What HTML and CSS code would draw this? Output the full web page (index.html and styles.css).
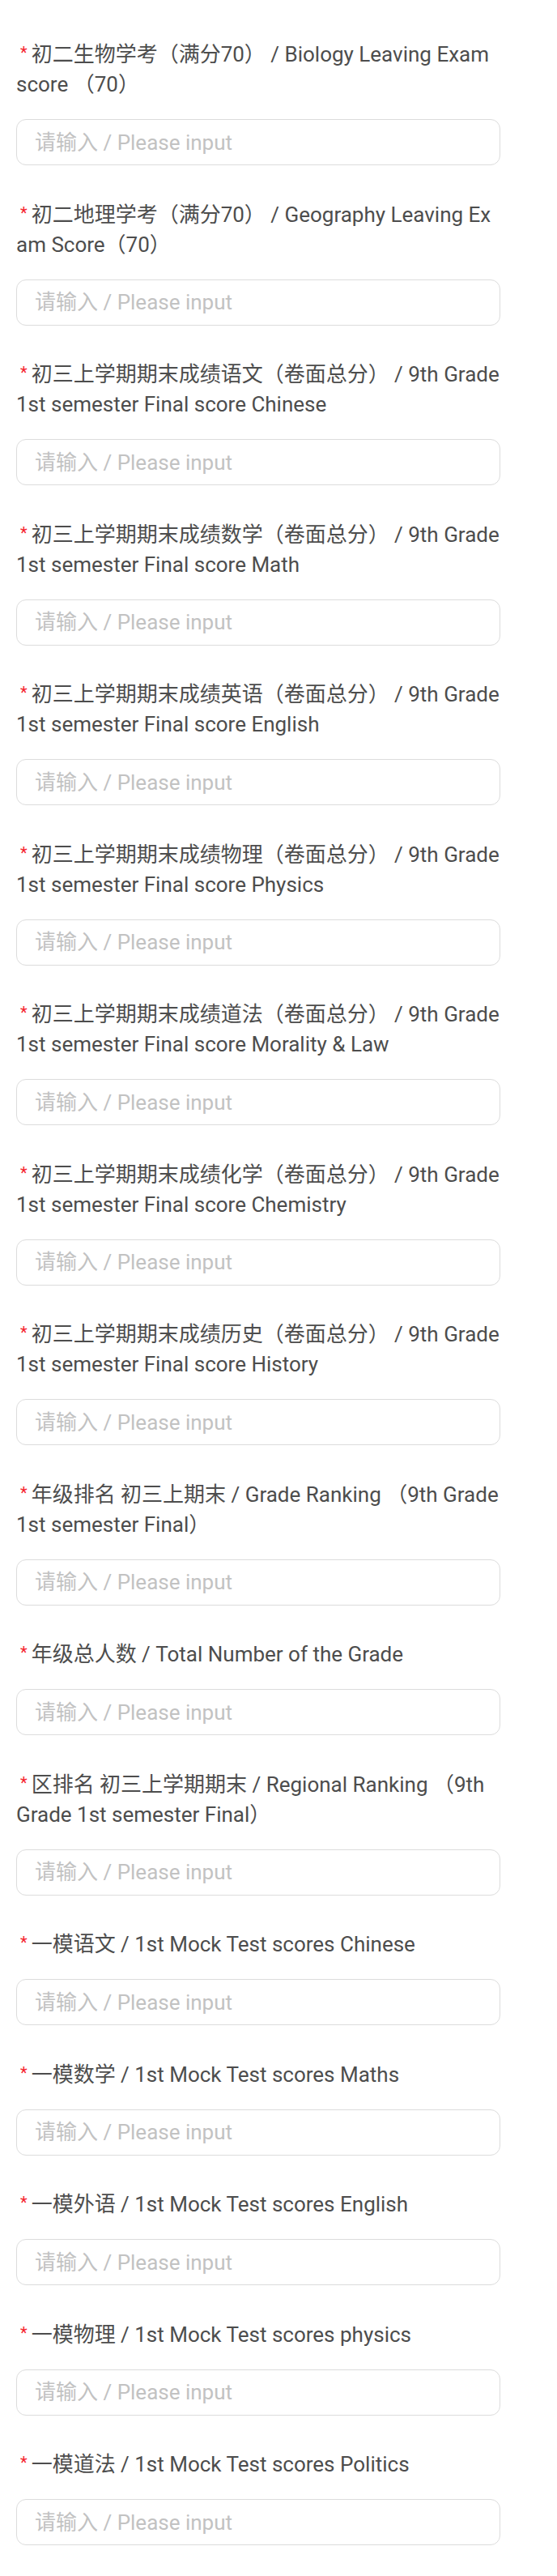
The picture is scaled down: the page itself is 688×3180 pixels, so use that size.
FILE: index.html
```html
<!DOCTYPE html>
<html lang="zh-CN">
<head>
  <meta charset="UTF-8">
  <title>成绩信息 / Scores</title>
  <link rel="stylesheet" href="styles.css">
</head>
<body>

<form class="formulario">
  <div class="campo">
    <label><span class="req">*</span>初二生物学考（满分70） / Biology Leaving Exam score （70）</label>
    <input type="text" placeholder="请输入 / Please input">
  </div>
  <div class="campo">
    <label><span class="req">*</span>初二地理学考（满分70） / Geography Leaving Exam Score（70）</label>
    <input type="text" placeholder="请输入 / Please input">
  </div>
  <div class="campo">
    <label><span class="req">*</span>初三上学期期末成绩语文（卷面总分） / 9th Grade 1st semester Final score Chinese</label>
    <input type="text" placeholder="请输入 / Please input">
  </div>
  <div class="campo">
    <label><span class="req">*</span>初三上学期期末成绩数学（卷面总分） / 9th Grade 1st semester Final score Math</label>
    <input type="text" placeholder="请输入 / Please input">
  </div>
  <div class="campo">
    <label><span class="req">*</span>初三上学期期末成绩英语（卷面总分） / 9th Grade 1st semester Final score English</label>
    <input type="text" placeholder="请输入 / Please input">
  </div>
  <div class="campo">
    <label><span class="req">*</span>初三上学期期末成绩物理（卷面总分） / 9th Grade 1st semester Final score Physics</label>
    <input type="text" placeholder="请输入 / Please input">
  </div>
  <div class="campo">
    <label><span class="req">*</span>初三上学期期末成绩道法（卷面总分） / 9th Grade 1st semester Final score Morality &amp; Law</label>
    <input type="text" placeholder="请输入 / Please input">
  </div>
  <div class="campo">
    <label><span class="req">*</span>初三上学期期末成绩化学（卷面总分） / 9th Grade 1st semester Final score Chemistry</label>
    <input type="text" placeholder="请输入 / Please input">
  </div>
  <div class="campo">
    <label><span class="req">*</span>初三上学期期末成绩历史（卷面总分） / 9th Grade 1st semester Final score History</label>
    <input type="text" placeholder="请输入 / Please input">
  </div>
  <div class="campo">
    <label><span class="req">*</span>年级排名 初三上期末 / Grade Ranking （9th Grade 1st semester Final）</label>
    <input type="text" placeholder="请输入 / Please input">
  </div>
  <div class="campo">
    <label><span class="req">*</span>年级总人数 / Total Number of the Grade</label>
    <input type="text" placeholder="请输入 / Please input">
  </div>
  <div class="campo">
    <label><span class="req">*</span>区排名 初三上学期期末 / Regional Ranking （9th Grade 1st semester Final）</label>
    <input type="text" placeholder="请输入 / Please input">
  </div>
  <div class="campo">
    <label><span class="req">*</span>一模语文 / 1st Mock Test scores Chinese</label>
    <input type="text" placeholder="请输入 / Please input">
  </div>
  <div class="campo">
    <label><span class="req">*</span>一模数学 / 1st Mock Test scores Maths</label>
    <input type="text" placeholder="请输入 / Please input">
  </div>
  <div class="campo">
    <label><span class="req">*</span>一模外语 / 1st Mock Test scores English</label>
    <input type="text" placeholder="请输入 / Please input">
  </div>
  <div class="campo">
    <label><span class="req">*</span>一模物理 / 1st Mock Test scores physics</label>
    <input type="text" placeholder="请输入 / Please input">
  </div>
  <div class="campo">
    <label><span class="req">*</span>一模道法 / 1st Mock Test scores Politics</label>
    <input type="text" placeholder="请输入 / Please input">
  </div>
</form>

</body>
</html>
```

FILE: styles.css
```css
body {
  font-family: Roboto, "Noto Sans CJK SC", sans-serif;
  background-color: #fff;
  color: #4d4d4d;
  margin: 0;
  padding: 49px 0 0 20px;
}
.formulario {
  width: 598px;
  display: flex;
  flex-direction: column;
  gap: 42.5px;
}
.campo {
  display: flex;
  flex-direction: column;
  gap: 24px;
}
.campo label {
  font-size: 26px;
  line-height: 37px;
  word-break: break-all;
}
.req {
  color: #f5222d;
  font-size: 20px;
  line-height: 1;
  vertical-align: 4px;
  margin: 0 5px 0 5px;
}
.campo input {
  box-sizing: border-box;
  width: 100%;
  height: 57px;
  margin: 0;
  padding: 0 22px;
  border: 1.5px solid #dcdcdc;
  border-radius: 12px;
  font-family: inherit;
  font-size: 26px;
  color: #4d4d4d;
  outline: none;
}
.campo input::placeholder {
  color: #c2c2c2;
}
```
